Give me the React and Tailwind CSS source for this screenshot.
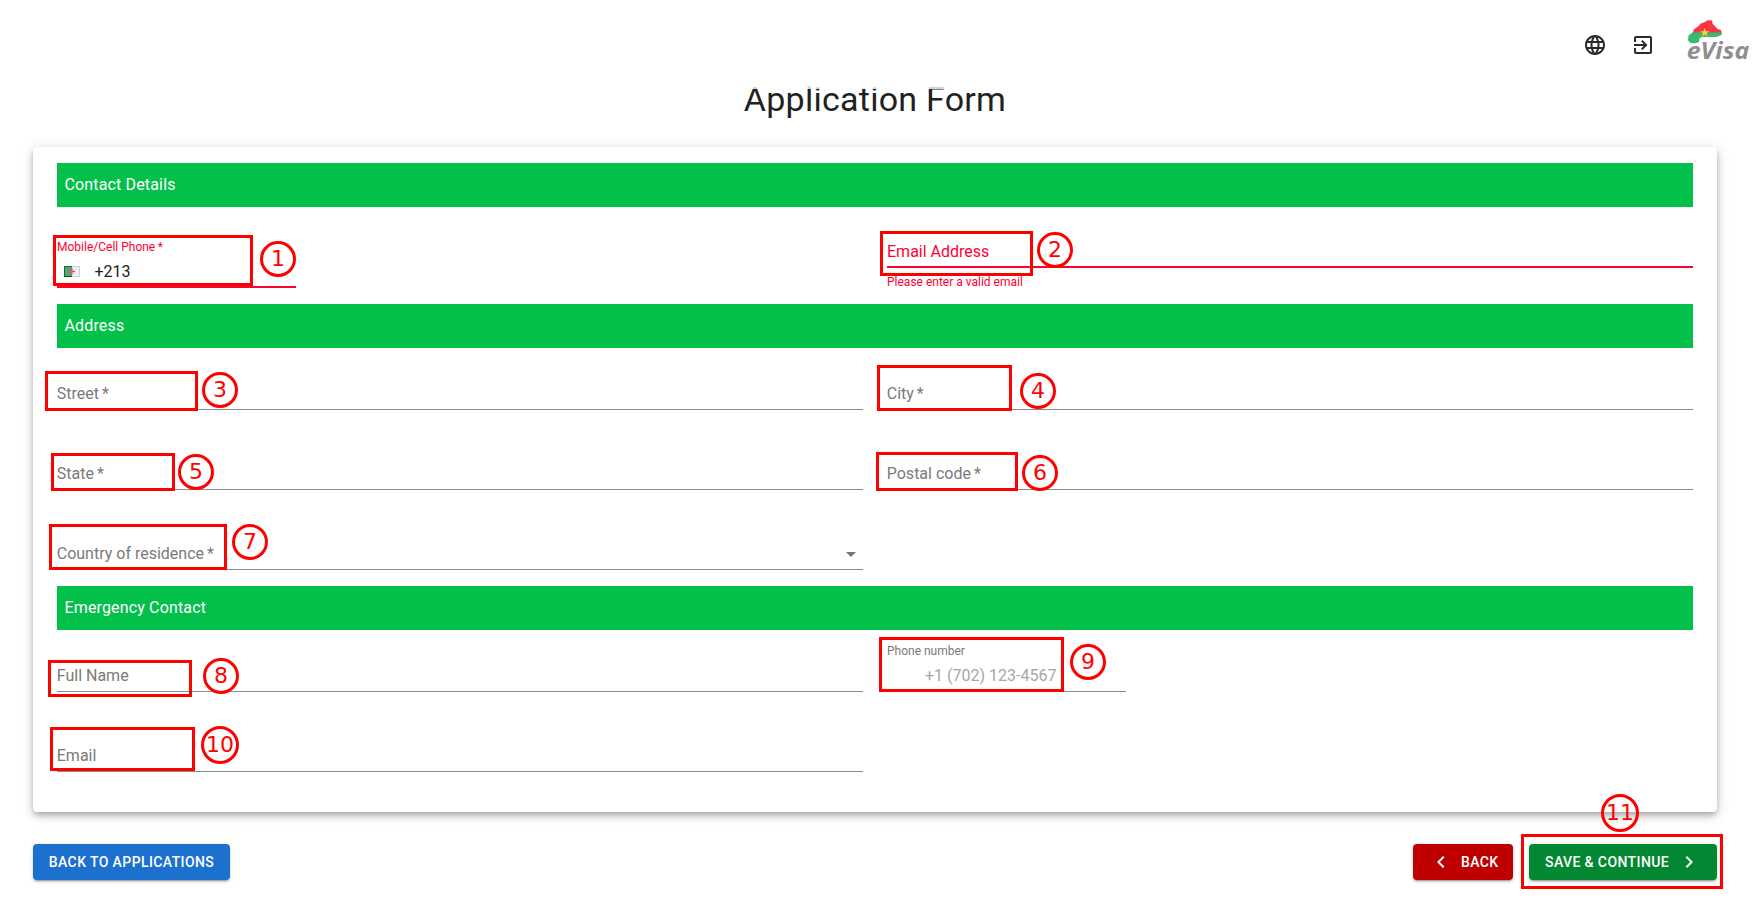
import { MdLanguage, MdExitToApp, MdArrowDropDown, MdChevronLeft, MdChevronRight } from "react-icons/md";

function Logo() {
  return (
    <svg width="64" height="44" viewBox="0 0 64 44" className="shrink-0 overflow-visible">
      <path d="M4.5 13 L6 9.3 L10.3 6.3 L12.7 3.5 L17 2 L19.5 0.2 L24 0.6 L24.8 4 L28 7.3 L29.5 9 L32.8 10 L33.8 13 Z" fill="#fb3348" />
      <path d="M4.5 12.5 L33.8 12.5 L33.6 15 L28.5 17 L14 17 L11.5 18.2 L11 22 L7.5 23.2 L2.3 23 L0 20.3 L0.6 15.6 Z" fill="#38bb6c" />
      <path d="M16.7 7.8 L17.8 11.2 L21.4 11.2 L18.5 13.3 L19.6 16.7 L16.7 14.6 L13.8 16.7 L14.9 13.3 L12 11.2 L15.6 11.2 Z" fill="#fbd22b" />
      <text x="-1.3" y="38.5" fontFamily="'Open Sans', 'Noto Sans', sans-serif" fontStyle="italic" fontWeight="700" fontSize="23.5" textLength="62.5" lengthAdjust="spacingAndGlyphs" fill="#8f8f8f">eVisa</text>
    </svg>
  );
}

function AlgeriaFlag() {
  return (
    <svg width="16" height="11" viewBox="0 0 16 11">
      <rect width="8" height="11" fill="#5aa27c" />
      <rect x="8" width="8" height="11" fill="#f1f1f1" />
      <path d="M.5 10.5V.5H8" fill="none" stroke="#087030" />
      <path d="M.5 10.5H8" fill="none" stroke="#04501f" />
      <path d="M8 .5H15.5V10.5H8" fill="none" stroke="#cfcfcf" />
      <path d="M9.3 3.4A2.6 2.6 0 1 0 9.3 7.6" fill="none" stroke="#e3575f" strokeWidth="1" />
      <path d="M7.5 5.5H11M9 4.2V6.8" stroke="#e3474f" strokeWidth="1" />
    </svg>
  );
}

function Band({ children }) {
  return <div className="h-11 bg-[#03c04a] pt-2.5 pl-[7.5px] text-base leading-6 tracking-[0.15px] text-white">{children}</div>;
}

function Field({ label, required, select }) {
  return (
    <div className="flex h-12 items-start justify-between border-b border-[#8e8e8e] pt-5 text-base leading-[23px] text-[#7a7a7a]">
      <span className="-ml-[0.25px]">
        {label}
        {required && <span className="ml-[3px]">*</span>}
      </span>
      {select && <MdArrowDropDown size={24} className="text-[#757575]" />}
    </div>
  );
}

const boxes = [
  "left-[53px] top-[235px] w-[200px] h-[51px]",
  "left-[880px] top-[231px] w-[153px] h-[45px]",
  "left-[45px] top-[371px] w-[153px] h-[40px]",
  "left-[877px] top-[365px] w-[135px] h-[46px]",
  "left-[51px] top-[453px] w-[124px] h-[38px]",
  "left-[876px] top-[452px] w-[142px] h-[39px]",
  "left-[49px] top-[524px] w-[178px] h-[46px]",
  "left-[48px] top-[660px] w-[144px] h-[37px]",
  "left-[879px] top-[637px] w-[185px] h-[55px]",
  "left-[50px] top-[727px] w-[145px] h-[44px]",
  "left-[1521px] top-[834px] w-[202px] h-[55px]",
];

const circles = [
  "left-[260px] top-[241px] size-9",
  "left-[1037px] top-[232px] size-9",
  "left-[202px] top-[372px] size-9",
  "left-[1020px] top-[373px] size-9",
  "left-[178px] top-[454px] size-9",
  "left-[1022px] top-[455px] size-9",
  "left-[232px] top-[524px] size-9",
  "left-[203px] top-[658px] size-9",
  "left-[1070px] top-[644px] size-9",
  "left-[201px] top-[726px] size-[38px]",
  "left-[1601px] top-[794px] size-[38px]",
];

const button =
  "flex h-9 items-center rounded text-[14px] font-medium tracking-[0.4px] text-white shadow-[0_3px_1px_-2px_rgba(0,0,0,0.2),0_2px_2px_0_rgba(0,0,0,0.14),0_1px_5px_0_rgba(0,0,0,0.12)]";

export default function App() {
  return (
    <div className="relative h-[901px] w-[1755px] overflow-hidden bg-white font-['Roboto',sans-serif] text-[#212121]">
      <header className="relative z-10 flex h-[89px] items-start justify-end bg-white/80 pr-[3px]">
        <MdLanguage size={24} className="mt-[33px] mr-6 text-[#2a2a2a]" />
        <MdExitToApp size={24} className="mt-[33px] mr-[33px] text-[#2a2a2a]" />
        <div className="mt-5">
          <Logo />
        </div>
      </header>

      <h1 className="-mt-[11px] h-[69px] pr-[5px] text-center text-[34px] leading-[42px] tracking-[0.25px]">Application Form</h1>

      <main className="mr-[38px] ml-[33px] h-[665px] rounded bg-white px-6 pt-4 shadow-[0_3px_5px_-1px_rgba(0,0,0,0.2),0_5px_8px_0_rgba(0,0,0,0.14),0_1px_14px_0_rgba(0,0,0,0.12)]">
        <Band>Contact Details</Band>
        <div className="grid h-[97px] grid-cols-2 gap-6 text-[#ff0033]">
          <div className="mt-[33px] h-12 w-[239px] border-b-2 border-[#ff0033]">
            <div className="-mt-[1.5px] h-[17.5px] text-xs leading-[17px]">
              Mobile/Cell Phone<span className="ml-[2.5px]">*</span>
            </div>
            <div className="flex items-center pt-1 pl-[7px] text-base leading-[23px] text-[#212121]">
              <AlgeriaFlag />
              <span className="ml-[14.5px]">+213</span>
            </div>
          </div>
          <div className="mt-[13px]">
            <div className="h-12 border-b-2 border-[#ff0033] pt-5 text-base leading-[23px]">Email Address</div>
            <div className="mt-1 text-xs leading-5">Please enter a valid email</div>
          </div>
        </div>

        <Band>Address</Band>
        <div className="grid h-[238px] grid-cols-2 content-start gap-x-6 gap-y-8 pt-[14px]">
          <Field label="Street" required />
          <Field label="City" required />
          <Field label="State" required />
          <Field label="Postal code" required />
          <Field label="Country of residence" required select />
        </div>

        <Band>Emergency Contact</Band>
        <div className="grid grid-cols-2 gap-x-6 gap-y-8 pt-[14px]">
          <Field label="Full Name" />
          <div className="h-12 w-[239px] border-b border-[#8e8e8e]">
            <div className="-mt-[1.5px] h-[17.5px] text-xs leading-[17px] text-[#7a7a7a]">Phone number</div>
            <div className="pt-1 pl-[38px] text-base leading-[23px] text-[#a6a6a6]">+1 (702) 123-4567</div>
          </div>
          <Field label="Email" />
        </div>
      </main>

      <footer className="mt-8 mr-[38px] ml-[33px] flex gap-4">
        <button className={button + " mr-auto w-[197px] justify-center bg-[#1c70ce]"}>BACK TO APPLICATIONS</button>
        <button className={button + " w-[100px] bg-[#bf0000] pl-4"}>
          <MdChevronLeft size={24} className="mr-2" />
          BACK
        </button>
        <button className={button + " w-[188px] bg-[#038732] pl-4"}>
          SAVE &amp; CONTINUE
          <MdChevronRight size={24} className="ml-2" />
        </button>
      </footer>

      {boxes.map((place) => (
        <div key={place} className={"absolute z-20 border-3 border-[#ff0000] " + place} />
      ))}
      {circles.map((place, i) => (
        <div
          key={place}
          className={
            "absolute z-20 flex items-center justify-center rounded-full border-3 border-[#ff0000] font-['DejaVu_Sans',sans-serif] text-[22px] leading-none text-[#ff0000] " + place
          }
        >
          {i + 1}
        </div>
      ))}
    </div>
  );
}
